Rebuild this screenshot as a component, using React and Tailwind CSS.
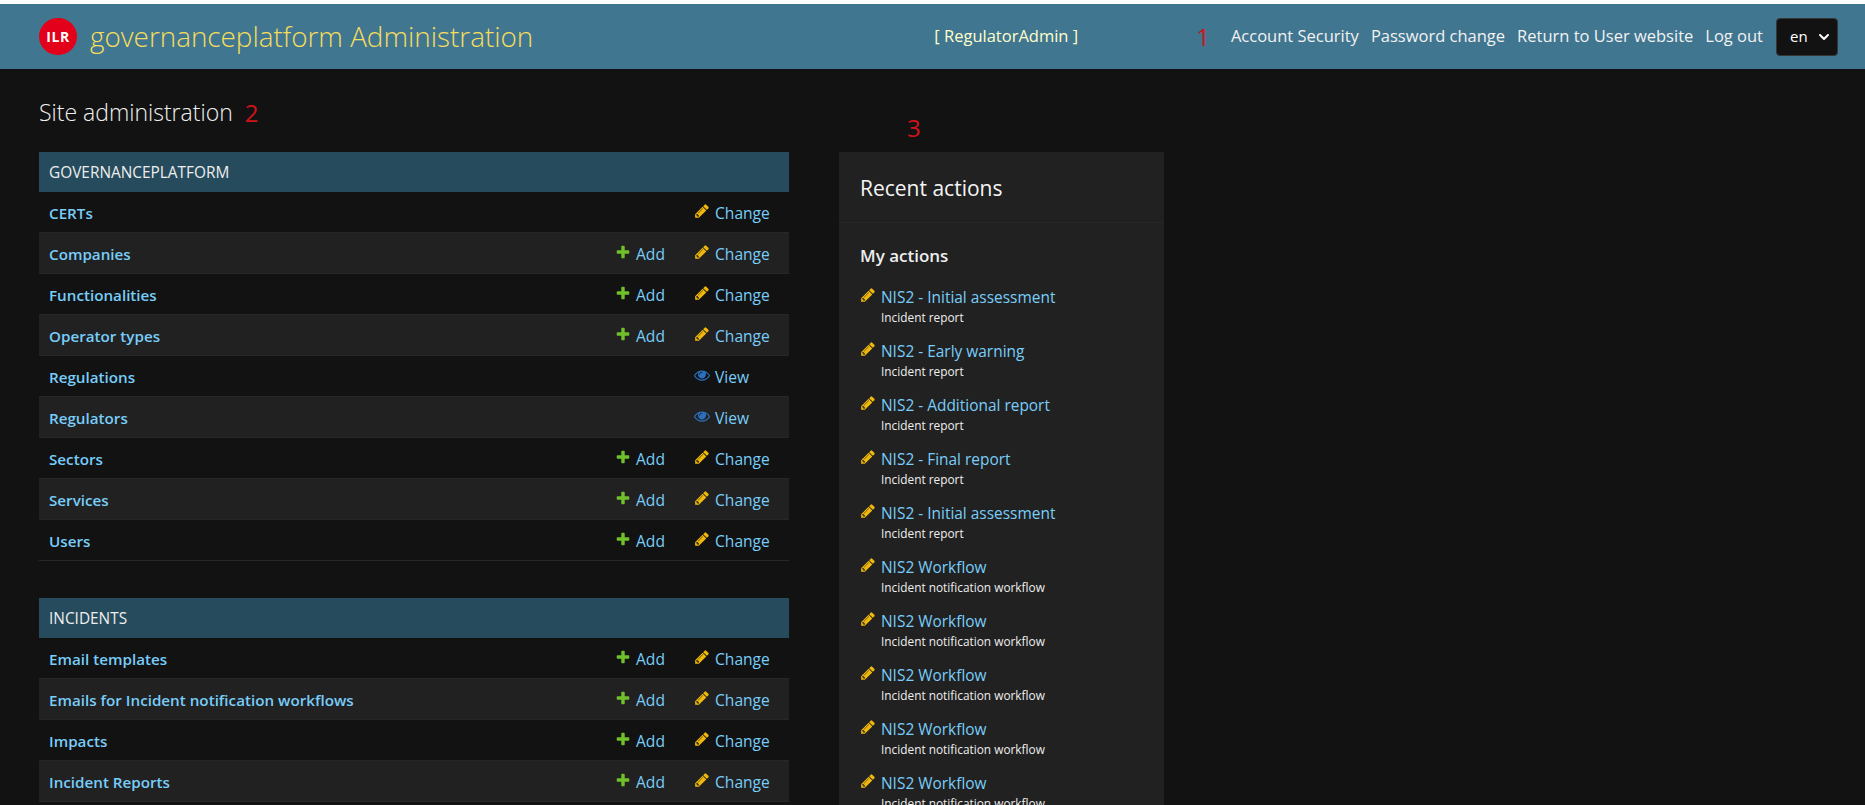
import { ChevronDown } from 'lucide-react';

function AddIcon() {
    return (
        <svg width="16" height="16" viewBox="0 0 1792 1792" className="shrink-0 mb-[5px]">
            <path fill="#70bf2b" d="M1600 796v192q0 40-28 68t-68 28h-416v416q0 40-28 68t-68 28h-192q-40 0-68-28t-28-68v-416h-416q-40 0-68-28t-28-68v-192q0-40 28-68t68-28h416v-416q0-40 28-68t68-28h192q40 0 68 28t28 68v416h416q40 0 68 28t28 68z" />
        </svg>
    );
}

function PencilIcon({ className = 'mb-[5px]' }) {
    return (
        <svg width="16" height="16" viewBox="0 0 1792 1792" className={`shrink-0 ${className}`}>
            <path fill="#efb80b" d="M491 1536l91-91-235-235-91 91v107h128v128h107zm523-928q0-22-22-22-10 0-17 7l-542 542q-7 7-7 17 0 22 22 22 10 0 17-7l542-542q7-7 7-17zm-54-192l416 416-832 832h-416v-416zm683 96q0 53-37 90l-166 166-416-416 166-165q36-38 90-38 53 0 91 38l235 234q37 39 37 91z" />
        </svg>
    );
}

function EyeIcon() {
    return (
        <svg width="16" height="16" viewBox="0 0 1792 1792" className="shrink-0 mb-[5px]">
            <path fill="#2b70bf" d="M1664 960q-152-236-381-353 61 104 61 225 0 185-131.500 316.500t-316.500 131.500-316.500-131.500-131.500-316.500q0-121 61-225-229 117-381 353 133 205 333.500 326.500t434.500 121.500 434.500-121.500 333.500-326.500zm-720-384q0-20-14-34t-34-14q-125 0-214.500 89.500t-89.500 214.500q0 20 14 34t34 14 34-14 14-34q0-86 61-147t147-61q20 0 34-14t14-34zm848 384q0 34-20 69-140 230-376.500 368.500t-499.500 138.500-499.500-139-376.500-368q-20-35-20-69t20-69q140-229 376.500-368t499.500-139 499.500 139 376.500 368q20 35 20 69z" />
        </svg>
    );
}

const platformRows = [
    { name: 'CERTs', add: false, kind: 'change' },
    { name: 'Companies', add: true, kind: 'change' },
    { name: 'Functionalities', add: true, kind: 'change' },
    { name: 'Operator types', add: true, kind: 'change' },
    { name: 'Regulations', add: false, kind: 'view' },
    { name: 'Regulators', add: false, kind: 'view' },
    { name: 'Sectors', add: true, kind: 'change' },
    { name: 'Services', add: true, kind: 'change' },
    { name: 'Users', add: true, kind: 'change' },
];

const incidentRows = [
    { name: 'Email templates', add: true, kind: 'change' },
    { name: 'Emails for Incident notification workflows', add: true, kind: 'change' },
    { name: 'Impacts', add: true, kind: 'change' },
    { name: 'Incident Reports', add: true, kind: 'change' },
];

const actions = [
    { title: 'NIS2 - Initial assessment', sub: 'Incident report' },
    { title: 'NIS2 - Early warning', sub: 'Incident report' },
    { title: 'NIS2 - Additional report', sub: 'Incident report' },
    { title: 'NIS2 - Final report', sub: 'Incident report' },
    { title: 'NIS2 - Initial assessment', sub: 'Incident report' },
    { title: 'NIS2 Workflow', sub: 'Incident notification workflow' },
    { title: 'NIS2 Workflow', sub: 'Incident notification workflow' },
    { title: 'NIS2 Workflow', sub: 'Incident notification workflow' },
    { title: 'NIS2 Workflow', sub: 'Incident notification workflow' },
    { title: 'NIS2 Workflow', sub: 'Incident notification workflow' },
];

function ModuleTable({ title, rows }) {
    return (
        <div>
            <div className="h-10 flex items-center pt-[2px] px-[10px] bg-[#264b5d] text-[#eeeeee] text-[15.4px] uppercase">{title}</div>
            {rows.map((row, i) => (
                <div
                    key={row.name}
                    className={`h-[41px] flex items-center pt-[4px] pl-[10px] border-b border-[#272727] text-[15.6px] ${i % 2 === 1 ? 'bg-[#212121]' : ''}`}
                >
                    <span className="flex-1 mb-[2px] text-[15.2px] font-semibold text-[#78cdf9]">{row.name}</span>
                    <span className="w-[79px] flex items-center gap-[5px] text-[#78cdf9]">
                        {row.add && <AddIcon />}
                        {row.add && <span>Add</span>}
                    </span>
                    <span className="w-[95px] flex items-center gap-[5px] text-[#78cdf9]">
                        {row.kind === 'change' ? <PencilIcon /> : <EyeIcon />}
                        {row.kind === 'change' ? 'Change' : 'View'}
                    </span>
                </div>
            ))}
        </div>
    );
}

export default function App() {
    return (
        <div className="h-screen overflow-hidden bg-[#121212] font-['Open_Sans',sans-serif] text-[#eeeeee]">
            {/* Top white strip */}
            <div className="h-1 bg-white" />

            {/* Header */}
            <header className="h-[65px] flex items-center pl-[39px] pr-[27px] bg-[#417690]">
                <div className="w-[38px] h-[37px] rounded-full bg-[#e2001a] flex items-center justify-center text-white font-bold text-[14px] tracking-[0.5px]">
                    ILR
                </div>
                <h1 className="ml-[13px] text-[#f5dd5d] text-[27.85px] font-light">governanceplatform Administration</h1>
                <span className="ml-auto text-[#ffffcc] text-[16.5px]">[ RegulatorAdmin ]</span>
                <span className="ml-[118px] text-[#d0121b] text-[24px]">1</span>
                <nav className="ml-[21px] flex items-center gap-[12px] text-[16.5px] text-[#f2f2f2]">
                    <a>Account Security</a>
                    <a>Password change</a>
                    <a>Return to User website</a>
                    <a>Log out</a>
                </nav>
                <div className="ml-[13px] w-[62px] h-[38px] flex items-center justify-between pl-[13px] pr-[5px] rounded bg-[#121212] border border-[#353535] text-[15px] text-white">
                    en
                    <ChevronDown size={16} strokeWidth={3} />
                </div>
            </header>

            {/* Content */}
            <main className="flex gap-[50px] pl-[39px]">
                <div className="w-[750px]">
                    <div className="h-[83px] flex items-center gap-[12px] pt-[4px]">
                        <h2 className="text-[23px] font-light text-[#f0f0f0]">Site administration</h2>
                        <span className="text-[#d0121b] text-[24px]">2</span>
                    </div>
                    <ModuleTable title="governanceplatform" rows={platformRows} />
                    <div className="h-[37px]" />
                    <ModuleTable title="Incidents" rows={incidentRows} />
                </div>

                <div className="w-[325px]">
                    <div className="h-[83px] flex items-end pb-[6px] pl-[68px]">
                        <span className="text-[#d0121b] text-[24px]">3</span>
                    </div>
                    <aside className="bg-[#212121] h-[660px]">
                        <div className="h-[71px] flex items-center pt-[4px] px-[21px] border-b border-[#272727] text-[21px] text-[#f5f5f5]">
                            Recent actions
                        </div>
                        <div className="px-[21px] pt-[21px]">
                            <h3 className="text-[17px] font-semibold text-[#eeeeee] leading-[24px]">My actions</h3>
                            <ul className="mt-[18px] flex flex-col gap-[14px]">
                                {actions.map((a, i) => (
                                    <li key={i} className="flex gap-[5px] h-10">
                                        <PencilIcon className="mt-[1px]" />
                                        <div>
                                            <div className="text-[15.45px] leading-[22px] text-[#78cdf9]">{a.title}</div>
                                            <div className="text-[11.85px] leading-[18px] text-[#eeeeee]">{a.sub}</div>
                                        </div>
                                    </li>
                                ))}
                            </ul>
                        </div>
                    </aside>
                </div>
            </main>
        </div>
    );
}
